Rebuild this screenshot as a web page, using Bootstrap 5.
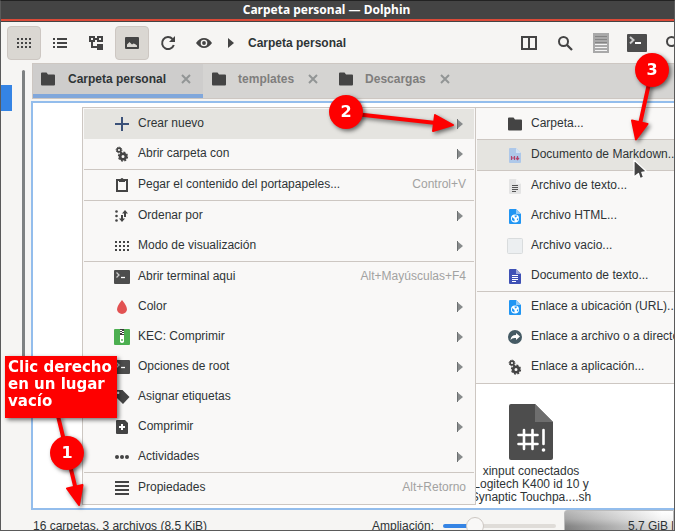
<!DOCTYPE html>
<html lang="es">
<head>
<meta charset="utf-8">
<meta name="viewport" content="width=device-width, initial-scale=1">
<title>Carpeta personal — Dolphin</title>
<link rel="stylesheet" href="https://cdn.jsdelivr.net/npm/bootstrap@5.3.0/dist/css/bootstrap.min.css">
<style>
  :root { --ink:#2e3436; --edge:#cdc7c2; --frame:#93bdec; --red:#fe0000; }
  body { font-family:"Liberation Sans",Arial,sans-serif; font-size:12px; line-height:16px; color:var(--ink); background:#f6f5f3; }
  svg { display:block; flex:none; }
  .window { border:1px solid #5a5a5a; border-top:1px solid #222; }
  .titlebar { background:#444; color:#fff; font:bold 12px/18px "Noto Sans",sans-serif; padding-right:22px; border-bottom:2px solid #dc4a38; }
  .toolbar { height:42px; padding:0 6px; border-top:1px solid #444; gap:2px; }
  .tool { width:34px; height:34px; padding:0; border:1px solid transparent; border-radius:4px; background:none; color:#444; display:flex; align-items:center; justify-content:center; flex:none; }
  .tool.pressed { background:#dad7d2; border-color:#cdc7c2; }
  .tools-end { gap:2px; margin-right:-22px; }
  .crumb { color:var(--ink); gap:14px; margin-left:5px; }
  .places { width:30px; padding-top:7px; }
  .place-on { width:11px; height:26px; margin-top:15px; background:#3584e4; }
  .scroller { width:3px; height:346px; margin-left:10px; border-radius:2px; background:#7e8182; }
  .tabstrip { height:36px; background:#d5d4d2; border:1px solid var(--edge); border-right:0; margin:0 0 2px 1px; }
  .tab-item { padding:0 12px 0 9px; gap:12px; color:#7f7e7d; border-bottom:4px solid transparent; }
  .tab-item.current { background:#cecdcc; color:var(--ink); border-bottom-color:#80a7db; padding-left:8px; gap:13px; }
  .tab-item button { border:0; background:none; padding:0; color:inherit; font-weight:bold; }
  .tab-item .tab-close { color:#929595; margin-left:2px; }
  .fileview { background:#fff; border:2px solid var(--frame); border-right:0; padding:0 78px 4px 0; }
  .file-cell { width:130px; line-height:13px; border:0; background:none; padding:0; color:var(--ink); }
  .statusbar { height:20px; padding-left:32px; }
  .statusbar > * { height:31px; }
  .zoombox { gap:9px; }
  .zoombox input { appearance:none; width:113px; height:18px; margin:0; background:none; }
  .zoombox input::-webkit-slider-runnable-track { height:4px; border-radius:2px; background:linear-gradient(90deg,#3584e4 28%,#dfdcd8 28%); }
  .zoombox input::-webkit-slider-thumb { appearance:none; width:18px; height:18px; margin-top:-7px; border-radius:50%; border:1px solid #cdc7c2; background:#f9f8f7; }
  .disk { width:110px; padding-left:63px; margin-left:8px; border:1px solid #bbb; border-radius:3px 0 0 0; background:linear-gradient(90deg,rgba(110,110,110,.5),rgba(255,255,255,.7) 90%),linear-gradient(180deg,#fff 0,#ddd 8px,#999 15px,#777 100%); }
  .ctx { top:107px; background:#f9f8f7; border:1px solid var(--edge); padding:1px; z-index:5; }
  .ctx-main { left:82px; width:394px; }
  .ctx-sub { left:475px; right:1px; border-right:0; padding-right:0; overflow:hidden; }
  .ctx .dropdown-item { height:30px; padding:0 8px 2px 30px; gap:8px; display:flex; align-items:center; color:var(--ink); line-height:16px; }
  .ctx .dropdown-item svg { margin-top:2px; }
  .ctx .dropdown-item.hot, .ctx .dropdown-item:hover { background:#e5e4e0; }
  .ctx kbd { background:none; color:#a2a2a1; font:inherit; padding:0; margin-left:auto; }
  .ctx .more { margin-right:3px; margin-left:auto; }
  .ctx hr { margin:0; border-color:var(--edge); opacity:1; }
  .layer { left:0; top:0; z-index:8; pointer-events:none; filter:drop-shadow(2px 2px 2px rgba(0,0,0,.55)); }
  .bubble { width:34px; height:34px; background:var(--red); color:#fff; font:bold 16px/34px "DejaVu Sans",sans-serif; text-align:center; }
  .note { left:5px; top:356px; width:112px; height:62px; padding:3px 3px 0; background:var(--red); color:#fff; font:bold 15px/17px "DejaVu Sans",sans-serif; }
  .b1 { left:50px; top:436px; } .b2 { left:329px; top:95px; } .b3 { left:635px; top:53px; }
  .pointer { left:632px; top:157px; z-index:9; }
</style>
<script src="https://cdn.jsdelivr.net/npm/bootstrap@5.3.0/dist/js/bootstrap.bundle.min.js"></script>
</head>
<body class="overflow-hidden">
<svg width="0" height="0" class="position-absolute" aria-hidden="true">
  <symbol id="grid" viewBox="0 0 16 16"><path fill="currentColor" d="M1 3h2v2H1zM5 3h2v2H5zM9 3h2v2H9zM13 3h2v2h-2zM1 7h2v2H1zM5 7h2v2H5zM9 7h2v2H9zM13 7h2v2h-2zM1 11h2v2H1zM5 11h2v2H5zM9 11h2v2H9zM13 11h2v2h-2z"/></symbol>
  <symbol id="folder" viewBox="0 0 14 14"><path fill="#444" d="M0 1.500Q0 .5 1 .5H5.500L7 2.500H13Q14 2.500 14 3.500V12.500Q14 13.500 13 13.500H1Q0 13.500 0 12.500z"/></symbol>
  <symbol id="cross" viewBox="0 0 10 10"><path d="M1 1l8 8M9 1l-8 8" stroke="currentColor" stroke-width="2"/></symbol>
  <symbol id="more" viewBox="0 0 6 10"><path fill="#888b8c" d="M0 0l6 5-6 5z"/><path fill="#6c7071" d="M0 0h1v10H0z"/></symbol>
  <symbol id="gears" viewBox="0 0 16 16"><g fill="none" stroke="#444"><circle cx="5" cy="4" r="1.900" stroke-width="1.600"/><circle cx="5" cy="4" r="2.900" stroke-width="1" stroke-dasharray="1.200 1.080"/><circle cx="9" cy="10.500" r="2.800" stroke-width="2.600"/><circle cx="9" cy="10.500" r="4.400" stroke-width="1.500" stroke-dasharray="1.900 1.550"/></g></symbol>
  <symbol id="term" viewBox="0 0 16 14"><rect width="16" height="14" rx="1" fill="#4d4d4d"/><path d="M2.500 2.500L5 5 2.500 7.500" fill="none" stroke="#ccc" stroke-width="1.300"/><path d="M7 7.500h4" stroke="#fff" stroke-width="1.300"/></symbol>
  <symbol id="web" viewBox="0 0 12 15"><path fill="#2196f3" d="M1 0h6l5 5v9q0 1-1 1H1q-1 0-1-1V1q0-1 1-1z"/><path fill="#90caf9" d="M7 0l5 5H7z"/><circle cx="6" cy="9.500" r="4" fill="#fff"/><path fill="#2196f3" d="M3 8l2.500 2v2.500L3 11zM5.500 6.500h2.500l-.5 1.500-1.500.5zM8 9.500h1.500l-.8 2-.9-.8z"/></symbol>
</svg>

<div class="window vh-100 d-flex flex-column position-relative overflow-hidden">
  <header class="titlebar text-center">Carpeta personal — Dolphin</header>

  <nav class="toolbar d-flex align-items-center" aria-label="Herramientas">
    <button class="tool pressed" aria-label="Iconos"><svg width="16" height="16"><use href="#grid"/></svg></button>
    <button class="tool" aria-label="Lista"><svg width="16" height="16" viewBox="0 0 16 16"><path fill="currentColor" d="M1 3h2v2H1zM5 3h10v2H5zM1 7h2v2H1zM5 7h10v2H5zM1 11h2v2H1zM5 11h10v2H5z"/></svg></button>
    <button class="tool" aria-label="Árbol"><svg width="16" height="16" viewBox="0 0 16 16"><path fill="none" stroke="currentColor" stroke-width="2" d="M2 2h4v4H2zM10 2h4v4h-4zM6 4h4M4 6v6h6"/><path fill="currentColor" d="M9 9h6v6H9z"/></svg></button>
    <button class="tool pressed" aria-label="Vista previa"><svg width="16" height="16" viewBox="0 0 16 16"><rect x="1" y="2" width="14" height="12" rx="1" fill="#444"/><path fill="#dad7d2" d="M3 12V9.500l2.500-2.500 2.500 2.500 1.500-1 1.500.5 2 1.500v1.500z"/></svg></button>
    <button class="tool" aria-label="Recargar"><svg width="16" height="16" viewBox="0 0 16 16"><path fill="none" stroke="currentColor" stroke-width="2" d="M12.500 4A6 6 0 1 0 13.800 10"/><path fill="currentColor" d="M15 1v6H9z"/></svg></button>
    <button class="tool" aria-label="Mostrar ocultos"><svg width="16" height="16" viewBox="0 0 16 16"><path fill="currentColor" d="M0 8Q3.500 3 8 3t8 5q-3.500 5-8 5T0 8z"/><circle cx="8" cy="8" r="3.300" fill="#f6f5f3"/><circle cx="8" cy="8" r="1.900" fill="currentColor"/></svg></button>
    <a href="#" class="crumb d-flex align-items-center fw-bold text-decoration-none text-nowrap"><svg width="6" height="10" viewBox="0 0 6 10"><path fill="#444" d="M0 0l6 5-6 5z"/></svg>Carpeta personal</a>
    <div class="tools-end d-flex ms-auto">
      <button class="tool" aria-label="Dividir"><svg width="16" height="16" viewBox="0 0 16 16"><path fill="none" stroke="currentColor" stroke-width="2" d="M1 2h14v12H1zM8 2v12"/></svg></button>
      <button class="tool" aria-label="Buscar"><svg width="16" height="16" viewBox="0 0 16 16"><circle cx="6.500" cy="6.500" r="4.500" fill="none" stroke="currentColor" stroke-width="2"/><path stroke="currentColor" stroke-width="2.300" d="M10 10l5 5"/></svg></button>
      <button class="tool" aria-label="Texto"><svg width="16" height="20" viewBox="0 0 16 20"><path fill="#a9a9a9" d="M0 0h16v20H0z"/><path stroke="#858585" d="M2 3.500h12M2 6.500h12M2 9.500h12"/><path stroke="#f4f4f4" d="M2 11.500h12M2 14.500h12M2 17.500h12"/></svg></button>
      <button class="tool" aria-label="Terminal"><svg width="20" height="18" viewBox="0 0 20 18"><rect width="20" height="18" rx="1" fill="#4d4d4d"/><path d="M3 3l3.500 3L3 9.500" fill="none" stroke="#ccc" stroke-width="2"/><path d="M8 9h6" stroke="#fff" stroke-width="2"/></svg></button>
      <button class="tool" aria-label="Filtrar"><svg width="16" height="16" viewBox="0 0 16 16"><circle cx="6.500" cy="6.500" r="4.500" fill="none" stroke="currentColor" stroke-width="2"/></svg></button>
    </div>
  </nav>

  <main class="d-flex flex-grow-1 overflow-hidden">
    <aside class="places d-flex flex-shrink-0"><div class="place-on"></div><div class="scroller"></div></aside>
    <section class="flex-grow-1 d-flex flex-column overflow-hidden">
      <div class="tabstrip d-flex flex-shrink-0">
        <div class="tab-item current d-flex align-items-center"><svg width="14" height="14"><use href="#folder"/></svg><button>Carpeta personal</button><button class="tab-close" aria-label="Cerrar"><svg width="10" height="10"><use href="#cross"/></svg></button></div>
        <div class="tab-item d-flex align-items-center"><svg width="14" height="14"><use href="#folder"/></svg><button>templates</button><button class="tab-close" aria-label="Cerrar"><svg width="10" height="10"><use href="#cross"/></svg></button></div>
        <div class="tab-item d-flex align-items-center"><svg width="14" height="14"><use href="#folder"/></svg><button>Descargas</button><button class="tab-close" aria-label="Cerrar"><svg width="10" height="10"><use href="#cross"/></svg></button></div>
      </div>
      <div class="fileview flex-grow-1 d-flex justify-content-end align-items-end">
        <button class="file-cell text-center">
          <svg class="mx-auto mb-1" width="44" height="58" viewBox="0 0 44 58"><path fill="#4d4d4d" d="M2 1h24l18 18v36q0 2-2 2H2q-2 0-2-2V3q0-2 2-2z"/><path fill="#6e6e6e" d="M26 1l18 18H26z"/><path fill="none" stroke="#fff" stroke-width="2.600" stroke-linecap="round" d="M15 27v19M23.500 27v19M9.500 32h19M9.500 41h19M34.500 27v14"/><circle cx="34.500" cy="47" r="1.800" fill="#fff"/></svg>
          xinput conectados<br>Logitech K400 id 10 y<br>Synaptic Touchpa....sh
        </button>
      </div>
    </section>
  </main>

  <footer class="statusbar d-flex text-nowrap flex-shrink-0">
    <span class="d-flex align-items-center me-auto">16 carpetas, 3 archivos (8,5 KiB)</span>
    <div class="zoombox d-flex align-items-center"><label for="zoom">Ampliación:</label><input id="zoom" type="range" min="0" max="100" value="24"></div>
    <span class="disk d-flex align-items-center overflow-hidden">5.7 GiB libres</span>
  </footer>
</div>

<div class="ctx ctx-main position-absolute" role="menu">
  <button class="dropdown-item hot"><svg width="16" height="16" viewBox="0 0 16 16"><path stroke="#3b5179" stroke-width="2" d="M8 1v14M1 8h14"/></svg>Crear nuevo<svg class="more" width="6" height="10"><use href="#more"/></svg></button>
  <button class="dropdown-item"><svg width="16" height="16"><use href="#gears"/></svg>Abrir carpeta con<svg class="more" width="6" height="10"><use href="#more"/></svg></button>
  <hr>
  <button class="dropdown-item"><svg width="16" height="16" viewBox="0 0 16 16"><path fill="none" stroke="#444" stroke-width="2" d="M3 3h10v11H3z"/><path fill="#444" d="M5 2h1.500q1.500-2 3 0H11v3H5z"/></svg>Pegar el contenido del portapapeles...<kbd>Control+V</kbd></button>
  <hr>
  <button class="dropdown-item"><svg width="16" height="16" viewBox="0 0 16 16"><g fill="#444"><circle cx="2.500" cy="3.500" r="1.300"/><circle cx="2.500" cy="8" r="1.300"/><circle cx="2.500" cy="12.500" r="1.300"/><path d="M11 2l3 3.500h-2V9h-2V5.500H8zM8 14l-3-3.500h2V7h2v3.500h2z"/></g></svg>Ordenar por<svg class="more" width="6" height="10"><use href="#more"/></svg></button>
  <button class="dropdown-item"><svg width="16" height="16" color="#444"><use href="#grid"/></svg>Modo de visualización<svg class="more" width="6" height="10"><use href="#more"/></svg></button>
  <hr>
  <button class="dropdown-item"><svg width="16" height="14"><use href="#term"/></svg>Abrir terminal aqui<kbd>Alt+Mayúsculas+F4</kbd></button>
  <button class="dropdown-item"><svg width="16" height="16" viewBox="0 0 16 16"><path fill="#e25252" d="M8 1q5 6 5 9.200A5 4.800 0 0 1 3 10.200Q3 7 8 1z"/></svg>Color<svg class="more" width="6" height="10"><use href="#more"/></svg></button>
  <button class="dropdown-item"><svg width="16" height="16" viewBox="0 0 16 16"><rect width="16" height="16" rx="1" fill="#4caf50"/><path fill="#3a3a3a" d="M6 0h4v6H6z"/><path fill="#fff" d="M6 1h2v1H6zM8 2h2v1H8zM6 3h2v1H6zM8 4h2v1H8zM6 6h4v7q-2 2-4 0z"/><path fill="#4caf50" d="M7.300 10h1.400v2H7.300z"/></svg>KEC: Comprimir<svg class="more" width="6" height="10"><use href="#more"/></svg></button>
  <button class="dropdown-item"><svg width="16" height="14"><use href="#term"/></svg>Opciones de root<svg class="more" width="6" height="10"><use href="#more"/></svg></button>
  <button class="dropdown-item"><svg width="16" height="16" viewBox="0 0 16 16"><path fill="#444" fill-rule="evenodd" d="M2 1h6.500l7 7L9 15 2 8zM4 2.500a1.300 1.300 0 1 0 .1 0z"/></svg>Asignar etiquetas<svg class="more" width="6" height="10"><use href="#more"/></svg></button>
  <button class="dropdown-item"><svg width="16" height="16" viewBox="0 0 16 16"><path fill="#444" d="M3 1h8l3 3v10q0 1-1 1H3q-1 0-1-1V2q0-1 1-1z"/><path stroke="#fff" stroke-width="2" d="M8 5v6M5 8h6"/></svg>Comprimir<svg class="more" width="6" height="10"><use href="#more"/></svg></button>
  <button class="dropdown-item"><svg width="16" height="16" viewBox="0 0 16 16" fill="#444"><circle cx="3" cy="8" r="2"/><circle cx="8" cy="8" r="2"/><circle cx="13" cy="8" r="2"/></svg>Actividades<svg class="more" width="6" height="10"><use href="#more"/></svg></button>
  <hr>
  <button class="dropdown-item"><svg width="16" height="16" viewBox="0 0 16 16"><path stroke="#444" stroke-width="2" d="M1 2h14M1 6h14M1 10h14M1 14h14"/></svg>Propiedades<kbd>Alt+Retorno</kbd></button>
</div>

<div class="ctx ctx-sub position-absolute" role="menu">
  <button class="dropdown-item"><svg width="16" height="14"><use href="#folder"/></svg>Carpeta...</button>
  <hr>
  <button class="dropdown-item hot"><svg width="16" height="15" viewBox="-2 0 16 15"><path fill="#aec8e9" d="M1 0h6l5 5v9q0 1-1 1H1q-1 0-1-1V1q0-1 1-1z"/><path fill="#d3e2f4" d="M7 0l5 5H7z"/><path fill="none" stroke="#b5446c" stroke-width="1.200" d="M2.500 12V8M5.500 8v4M2.500 10h3M8.500 8v3.500M7 10l1.500 1.700L10 10"/></svg>Documento de Markdown...</button>
  <hr>
  <button class="dropdown-item"><svg width="16" height="15" viewBox="-2 0 16 15"><path fill="#e4e4e4" d="M1 0h6l5 5v9q0 1-1 1H1q-1 0-1-1V1q0-1 1-1z"/><path fill="#f4f4f4" d="M7 0l5 5H7z"/><path stroke="#555" d="M3 6.500h6M3 8.500h6M3 10.500h6M3 12.500h4"/></svg>Archivo de texto...</button>
  <button class="dropdown-item"><svg width="16" height="15"><use href="#web"/></svg>Archivo HTML...</button>
  <button class="dropdown-item"><svg width="16" height="16" viewBox="0 0 16 16"><rect x=".5" y=".5" width="15" height="15" rx="1" fill="#eceff1" stroke="#d9dcdd"/></svg>Archivo vacio...</button>
  <button class="dropdown-item"><svg width="16" height="15" viewBox="-2 0 16 15"><path fill="#3f51b5" d="M1 0h6l5 5v9q0 1-1 1H1q-1 0-1-1V1q0-1 1-1z"/><path fill="#9fa8da" d="M7 0l5 5H7z"/><path stroke="#fff" d="M3 6.500h6M3 8.500h6M3 10.500h6M3 12.500h4"/></svg>Documento de texto...</button>
  <hr>
  <button class="dropdown-item"><svg width="16" height="15"><use href="#web"/></svg>Enlace a ubicación (URL)...</button>
  <button class="dropdown-item"><svg width="16" height="16" viewBox="0 0 16 16"><circle cx="8" cy="8" r="7" fill="#455a64"/><path fill="#fff" d="M9 4l4 3.500L9 11V9Q5 8.500 3.500 11 4 6 9 6z"/></svg>Enlace a archivo o a directorio...</button>
  <button class="dropdown-item"><svg width="16" height="16"><use href="#gears"/></svg>Enlace a aplicación...</button>
</div>

<svg class="pointer position-absolute" width="16" height="24" viewBox="0 0 16 24"><path d="M2 3v17l4.500-3.500 1.500 5 3.500-1.200-1.700-5 4.700-.8z" fill="#444" stroke="#fff" stroke-width="1.200" stroke-linejoin="round"/></svg>

<svg class="layer position-absolute" width="675" height="531" viewBox="0 0 675 531" aria-hidden="true">
  <g stroke="#fe0000" stroke-width="4" fill="#fe0000" stroke-linejoin="round">
    <path d="M58 416L76 490M346 113L436 123M652 70L640 124"/>
    <path stroke-width="2" d="M79 505L67 488.500 82.500 485zM453 125L433 131 435 115zM636 139.500L632 120.500 647.500 124z"/>
  </g>
</svg>
<div class="layer note position-absolute">Clic derecho en un lugar vacío</div>
<div class="layer bubble b1 rounded-circle position-absolute">1</div>
<div class="layer bubble b2 rounded-circle position-absolute">2</div>
<div class="layer bubble b3 rounded-circle position-absolute">3</div>
</body>
</html>
